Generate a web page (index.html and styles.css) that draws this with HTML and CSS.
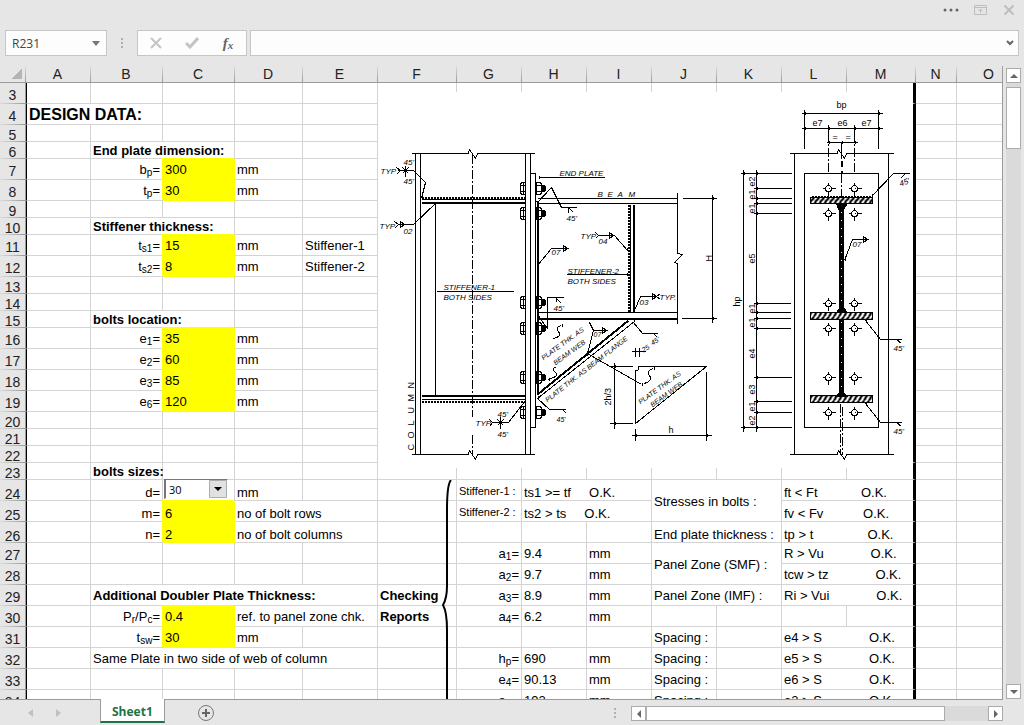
FILE: index.html
```html
<!DOCTYPE html>
<html lang="en">
<head>
    <meta charset="UTF-8">
    <meta name="viewport" content="width=device-width, initial-scale=1.0">
    <title>Sheet1</title>
    <link rel="stylesheet" href="styles.css">
</head>
<body>
    <header class="window-bar">
        <button class="icon-btn" aria-label="More"><svg width="18" height="14" viewBox="0 0 18 14"><g fill="#666"><circle cx="3" cy="7" r="1.5"/><circle cx="9" cy="7" r="1.5"/><circle cx="15" cy="7" r="1.5"/></g></svg></button>
        <button class="icon-btn" aria-label="Ribbon display options"><svg width="14" height="14" viewBox="0 0 14 14"><path d="M.5 2.500h12v9H.5zM.5 4.500h12M6.500 10V6M4.500 8l2-2 2 2" fill="none" stroke="#bdbdbd"/></svg></button>
        <button class="icon-btn" aria-label="Close"><svg width="14" height="14" viewBox="0 0 14 14"><path d="M2.500 2.500l9 9M11.500 2.500l-9 9" fill="none" stroke="#bdbdbd" stroke-width="2"/></svg></button>
    </header>

    <div class="formula-bar">
        <div class="box name-box">
            <input type="text" value="R231" aria-label="Name box">
            <button aria-label="Names"><svg width="8" height="5" viewBox="0 0 8 5"><path d="M0 0h8L4 5z" fill="#777"/></svg></button>
        </div>
        <span class="dots"></span>
        <div class="box fx-box">
            <button aria-label="Cancel"><svg width="12" height="12" viewBox="0 0 12 12"><path d="M1 1l10 10M11 1L1 11" fill="none" stroke="#c4c4c4" stroke-width="2"/></svg></button>
            <button aria-label="Enter"><svg width="14" height="12" viewBox="0 0 14 12"><path d="M1 6l4 4 8-9" fill="none" stroke="#c4c4c4" stroke-width="3"/></svg></button>
            <button class="fx" aria-label="Insert function">f<small>x</small></button>
        </div>
        <div class="box formula-box">
            <input type="text" aria-label="Formula">
            <button aria-label="Expand formula bar"><svg width="8" height="6" viewBox="0 0 8 6"><path d="M1 1l3 3 3-3" fill="none" stroke="#666" stroke-width="2"/></svg></button>
        </div>
    </div>

    <main class="workspace">
        <div class="sheet">
            <table>
                <colgroup>
                    <col class="w26"><col class="w65"><col class="w72"><col class="w72"><col class="w68"><col class="w75"><col class="w79">
                    <col class="w65"><col class="w65"><col class="w65"><col class="w65"><col class="w65"><col class="w65"><col class="w69"><col class="w41"><col class="w65">
                </colgroup>
                <thead>
                    <tr><th class="corner"><button aria-label="Select all"></button></th><th>A</th><th>B</th><th>C</th><th>D</th><th>E</th><th>F</th><th>G</th><th>H</th><th>I</th><th>J</th><th>K</th><th>L</th><th>M</th><th>N</th><th>O</th></tr>
                </thead>
                <tbody>
                    <tr><th>3</th><td></td><td></td><td></td><td></td><td></td><td></td><td></td><td></td><td></td><td></td><td></td><td></td><td class="edge"></td><td></td><td></td></tr>
                    <tr><th>4</th><td class="title" colspan="2">DESIGN DATA:</td><td></td><td></td><td></td>
                        <td class="edge drawing-cell" colspan="8" rowspan="19">
                            <svg class="drawing" viewBox="377.5 91.5 535 376" role="img" aria-label="End plate connection details">
                                <defs>
                                    <g id="bolt">
                                        <path d="M-2-6h-4l-1 2v8l1 2h4M-7-3h5M-7 3h5M-4-6v12M9-6h4l1 2v8l-1 2h-4zM9-3h5M9 3h5"/>
                                        <path class="fill" d="M15-3h2l1 1v4l-1 1h-2z"/>
                                    </g>
                                    <g id="hole"><circle r="3"/><path d="M-6 0h3M3 0h4M0-6v3M0 3v4M0 0h1"/></g>
                                    <pattern id="hatch" width="5" height="7" patternUnits="userSpaceOnUse"><path d="M-1 7L5-1M3 8L8 1" stroke-width="2"/></pattern>
                                </defs>

                                <!-- column -->
                                <path d="M411 153h57l1-4 6 9 2-5h57M411 454h57l1-4 6 9 2-5h57M415 153v301M420 153v301M525 153v301M530 153v301"/>
                                <path class="center" d="M472 154v262M472 434v20"/>
                                <path d="M530 173h5v254h-5M421 199h104M421 399h104M435 203v191"/>
                                <path class="thick" d="M421 202h104M421 395h104M537 200v194"/>
                                <path class="weld" d="M421 197h104M421 401h104"/>
                                <use href="#bolt" x="527" y="188"/><use href="#bolt" x="527" y="213"/><use href="#bolt" x="527" y="302"/>
                                <use href="#bolt" x="527" y="328"/><use href="#bolt" x="527" y="377"/><use href="#bolt" x="527" y="412"/>
                                <path d="M396 167l4 3-4 4M397 170h16l12 12-4 16M405 165v11M402 173l6-6M402 167l6 6M394 221l4 3-4 4M398 224h15l22-21M400 221v6l4-3z"/>
                                <path d="M436 291h77M489 419l3 3-3 4M492 422h16l17-22M500 416v12M497 425l6-6M497 419l6 6"/>
                                <g class="cad">
                                    <text x="380" y="173">TYP</text><text x="403" y="164">45'</text><text x="403" y="183">45'</text>
                                    <text x="379" y="228">TYP</text><text x="403" y="233">02</text>
                                    <text x="443" y="289">STIFFENER-1</text><text x="443" y="299">BOTH SIDES</text>
                                    <text x="475" y="425">TYP</text><text x="497" y="416">45'</text><text x="497" y="436">45'</text>
                                </g>
                                <text class="spread" transform="translate(413 450) rotate(-90)" x="0 12 25 37 49 62">COLUMN</text>

                                <!-- beam and stiffeners -->
                                <path d="M537 198h140M537 203h140M537 312h140M677 192v61l5 1-8 8 3 1v60M682 198h34M681 318h35M712 194v128"/>
                                <path class="thick" d="M537 318h140M633 204v108"/>
                                <path d="M630 204v108"/>
                                <path class="weld" d="M628 204v108"/>
                                <path d="M538 177h66M537 202l14-15 10 20h15M568 207v5M568 207l5 5"/>
                                <path d="M537 265l14-17h17M563 245v6l4-3z"/>
                                <path d="M595 232l3 3-3 3M598 235h16l13 15M609 232v6l4-3zM566 274h61"/>
                                <path d="M634 310l6-14h16M652 293v6l4-3zM660 293l-4 3 4 3"/>
                                <path d="M538 316l9 12v-31h16M556 297v4M556 298l5 5"/>
                                <path class="dot" d="M538 177h1M537 200v1M537 264h1M626 249h1M626 274h1M712 198h1M712 318h1M538 317h1M633 320h1M434 204h1M421 196h1M524 401h1M537 397h1"/>
                                <g class="cad">
                                    <text x="559" y="175">END PLATE</text><text x="566" y="220">45'</text><text x="551" y="254">07</text>
                                    <text x="580" y="238">TYP</text><text x="598" y="243">04</text>
                                    <text x="567" y="273">STIFFENER-2</text><text x="567" y="283">BOTH SIDES</text>
                                    <text x="639" y="304">03</text><text x="659" y="299">TYP.</text><text x="553" y="310">45'</text>
                                    <text x="597 607 617 628" y="196">BEAM</text>
                                </g>
                                <text transform="translate(711 261) rotate(-90)">H</text>

                                <!-- haunch -->
                                <path class="thick" d="M537 394l91-74"/>
                                <path d="M537 398l97-77M537 398l12 11h16M562 409l4 4M633 322l9 11h15M653 333l4 4M589 322l4 8h14M593 330l-6 23 54 31M602 327v6l4-3z"/>
                                <path d="M561 325q-7 1-3 6t-5 7M556 366q-6 3-1 6t-7 7M653 368q-8 2-4 7t-5 8"/>
                                <path class="dot" d="M561 325h1M548 379h1M653 368h1M641 384h1M586 354h1"/>
                                <path d="M635 347v9M639 347v9M631 351h14"/>
                                <path d="M635 370h2q2-1 1-4h68L635 423zM614 362v66M609 366h23M609 423h23M631 435h80M635 428v12M706 371v69"/>
                                <path class="dot" d="M614 366h1M614 423h1M635 435h1M706 435h1"/>
                                <g class="cad small">
                                    <text transform="translate(543 360) rotate(-36)">PLATE THK. AS</text>
                                    <text transform="translate(555 365) rotate(-36)">BEAM WEB</text>
                                    <text transform="translate(547 402) rotate(-38)">PLATE THK. AS BEAM FLANGE</text>
                                    <text transform="translate(640 404) rotate(-36)">PLATE THK. AS</text>
                                    <text transform="translate(652 407) rotate(-36)">BEAM WEB</text>
                                    <text x="593" y="336">07</text>
                                    <text transform="translate(643 352) rotate(-30)">25</text>
                                    <text transform="translate(652 345) rotate(-30)">45'</text>
                                    <text x="556" y="421">45'</text>
                                </g>
                                <text transform="translate(610 405) rotate(-90)">2h/3</text>
                                <text x="668" y="432">h</text>

                                <!-- end plate elevation -->
                                <path d="M801 113h81M801 128h81M804 109v39M878 109v39M828 124v8M854 124v8M826 142h31"/>
                                <path class="center" d="M828 132v41M854 132v41M841 173v24"/>
                                <path d="M789 153h48l1-4 6 9 2-5h47M789 454h48l1-4 6 9 2-5h47M794 153v301M888 153v301M804 173h74v254h-74z"/>
                                <path d="M841 142v16"/>
                                <path class="thick" d="M841 160v6M841 170v3"/>
                                <path class="band" d="M841 209v97M841 319v75"/>
                                <path class="band-dots" d="M841 211v93M841 321v71"/>
                                <path class="center" d="M840 403v51M842 406v48"/>
                                <path class="fill" d="M836 203h11l-4 6h-5zM841 305l-5 7h11zM838 393h6l3 3h-12z"/>
                                <g class="flange"><rect x="810" y="197" width="62" height="6"/><rect x="810" y="312" width="62" height="7"/><rect x="810" y="395" width="62" height="7"/></g>
                                <path class="weld" d="M811 196h61"/>
                                <use href="#hole" x="828" y="188"/><use href="#hole" x="854" y="188"/><use href="#hole" x="828" y="213"/><use href="#hole" x="854" y="213"/>
                                <use href="#hole" x="828" y="303"/><use href="#hole" x="854" y="303"/><use href="#hole" x="828" y="328"/><use href="#hole" x="854" y="328"/>
                                <use href="#hole" x="828" y="377"/><use href="#hole" x="854" y="377"/><use href="#hole" x="828" y="412"/><use href="#hole" x="854" y="412"/>
                                <path d="M743 169v262M756 169v262M740 173h51M740 427h51M753 188h38M753 198h38M753 203h38M753 213h38M753 303h37M753 312h37M753 318h37M753 328h37M753 377h38M753 401h38M753 412h38"/>
                                <path d="M871 196l22-23h16M905 173l-5 5M844 260l8-21h16M863 236v6l4-3zM865 320l15 19h21M865 403l15 19h21M896 339l5 4M896 422l5 4"/>
                                <path class="dot" d="M804 113h1M878 113h1M804 128h1M828 128h1M854 128h1M878 128h1M828 142h1M841 142h1M854 142h1M743 173h1M756 173h1M743 427h1M756 427h1M756 188h1M756 198h1M756 203h1M756 213h1M756 303h1M756 312h1M756 318h1M756 328h1M756 377h1M756 401h1M756 412h1M871 195h1M844 259h1M865 320h1M865 403h1"/>
                                <text x="836" y="107">bp</text><text x="812" y="125">e7</text><text x="837" y="125">e6</text><text x="861" y="125">e7</text>
                                <text x="832" y="139">=</text><text x="845" y="139">=</text>
                                <text transform="translate(739 306) rotate(-90)">hp</text>
                                <g transform="translate(754 0)">
                                    <text transform="translate(0 186) rotate(-90)">e2</text><text transform="translate(0 199) rotate(-90)">e1</text><text transform="translate(0 213) rotate(-90)">e1</text>
                                    <text transform="translate(0 263) rotate(-90)">e5</text><text transform="translate(0 313) rotate(-90)">e1</text><text transform="translate(0 327) rotate(-90)">e1</text>
                                    <text transform="translate(0 358) rotate(-90)">e4</text><text transform="translate(0 394) rotate(-90)">e3</text><text transform="translate(0 411) rotate(-90)">e1</text><text transform="translate(0 425) rotate(-90)">e2</text>
                                </g>
                                <g class="cad">
                                    <text x="852" y="246">07</text><text x="893" y="350">45'</text><text x="893" y="433">45'</text>
                                    <text transform="translate(900 186) rotate(-20)">45'</text>
                                </g>
                            </svg>
                        </td><td></td><td></td></tr>
                    <tr class="low"><th>5</th><td></td><td></td><td></td><td></td><td></td><td></td><td></td></tr>
                    <tr class="low"><th>6</th><td></td><td class="bold" colspan="2">End plate dimension:</td><td></td><td></td><td></td><td></td></tr>
                    <tr><th>7</th><td></td><td class="num">b<sub>p</sub>=</td><td class="input">300</td><td>mm</td><td></td><td></td><td></td></tr>
                    <tr><th>8</th><td></td><td class="num">t<sub>p</sub>=</td><td class="input">30</td><td>mm</td><td></td><td></td><td></td></tr>
                    <tr class="low"><th>9</th><td></td><td></td><td></td><td></td><td></td><td></td><td></td></tr>
                    <tr class="low"><th>10</th><td></td><td class="bold" colspan="2">Stiffener thickness:</td><td></td><td></td><td></td><td></td></tr>
                    <tr><th>11</th><td></td><td class="num">t<sub>s1</sub>=</td><td class="input">15</td><td>mm</td><td>Stiffener-1</td><td></td><td></td></tr>
                    <tr><th>12</th><td></td><td class="num">t<sub>s2</sub>=</td><td class="input">8</td><td>mm</td><td>Stiffener-2</td><td></td><td></td></tr>
                    <tr class="low"><th>13</th><td></td><td></td><td></td><td></td><td></td><td></td><td></td></tr>
                    <tr class="low"><th>14</th><td></td><td></td><td></td><td></td><td></td><td></td><td></td></tr>
                    <tr class="low"><th>15</th><td></td><td class="bold" colspan="2">bolts location:</td><td></td><td></td><td></td><td></td></tr>
                    <tr><th>16</th><td></td><td class="num">e<sub>1</sub>=</td><td class="input">35</td><td>mm</td><td></td><td></td><td></td></tr>
                    <tr><th>17</th><td></td><td class="num">e<sub>2</sub>=</td><td class="input">60</td><td>mm</td><td></td><td></td><td></td></tr>
                    <tr><th>18</th><td></td><td class="num">e<sub>3</sub>=</td><td class="input">85</td><td>mm</td><td></td><td></td><td></td></tr>
                    <tr><th>19</th><td></td><td class="num">e<sub>6</sub>=</td><td class="input">120</td><td>mm</td><td></td><td></td><td></td></tr>
                    <tr class="low"><th>20</th><td></td><td></td><td></td><td></td><td></td><td></td><td></td></tr>
                    <tr class="low"><th>21</th><td></td><td></td><td></td><td></td><td></td><td></td><td></td></tr>
                    <tr class="low"><th>22</th><td></td><td></td><td></td><td></td><td></td><td></td><td></td></tr>
                    <tr class="low"><th>23</th><td></td><td class="bold">bolts sizes:</td><td></td><td></td><td></td><td></td><td></td><td></td><td></td><td></td><td></td><td></td><td class="edge"></td><td></td><td></td></tr>
                    <tr class="bottom"><th>24</th><td></td><td class="num"><label for="bolt-size">d=</label></td>
                        <td class="combo-cell"><div class="combo"><select id="bolt-size"><option>24</option><option selected>30</option><option>36</option></select><svg width="18" height="18" viewBox="0 0 18 18"><path d="M.5.5h17v17H.5z" fill="#e1e1e1" stroke="#adadad"/><path d="M5 7h8l-4 4z"/></svg></div></td>
                        <td>mm</td><td></td>
                        <td class="brace-cell"><svg class="brace" width="12" height="222" viewBox="0 0 12 222"><path d="M10 0Q6 4 6 30V106Q6 118 2 125Q6 132 6 150V222" fill="none" stroke="#000" stroke-width="2"/></svg></td>
                        <td class="note">Stiffener-1 :</td><td colspan="2">ts1 &gt;= tf     O.K.</td><td class="merged" colspan="2" rowspan="2">Stresses in bolts :</td><td class="edge" colspan="2">ft &lt; Ft            O.K.</td><td></td><td></td></tr>
                    <tr class="bottom"><th>25</th><td></td><td class="num">m=</td><td class="input">6</td><td colspan="2">no of bolt rows</td><td></td><td class="note">Stiffener-2 :</td><td colspan="2">ts2 &gt; ts     O.K.</td><td class="edge" colspan="2">fv &lt; Fv           O.K.</td><td></td><td></td></tr>
                    <tr class="bottom"><th>26</th><td></td><td class="num">n=</td><td class="input">2</td><td colspan="2">no of bolt columns</td><td></td><td></td><td></td><td></td><td colspan="2">End plate thickness :</td><td class="edge" colspan="2">tp &gt; t               O.K.</td><td></td><td></td></tr>
                    <tr><th>27</th><td></td><td></td><td></td><td></td><td></td><td></td><td class="num">a<sub>1</sub>=</td><td>9.4</td><td>mm</td><td colspan="2" rowspan="2">Panel Zone (SMF) :</td><td class="edge" colspan="2">R &gt; Vu             O.K.</td><td></td><td></td></tr>
                    <tr><th>28</th><td></td><td></td><td></td><td></td><td></td><td></td><td class="num">a<sub>2</sub>=</td><td>9.7</td><td>mm</td><td class="edge" colspan="2">tcw &gt; tz             O.K.</td><td></td><td></td></tr>
                    <tr><th>29</th><td></td><td class="bold" colspan="4">Additional Doubler Plate Thickness:</td><td class="bold">Checking</td><td class="num">a<sub>3</sub>=</td><td>8.9</td><td>mm</td><td colspan="2">Panel Zone (IMF) :</td><td class="edge" colspan="2">Ri &gt; Vui             O.K.</td><td></td><td></td></tr>
                    <tr><th>30</th><td></td><td class="num">P<sub>r</sub>/P<sub>c</sub>=</td><td class="input">0.4</td><td colspan="2">ref. to panel zone chk.</td><td class="bold">Reports</td><td class="num">a<sub>4</sub>=</td><td>6.2</td><td>mm</td><td></td><td></td><td></td><td class="edge"></td><td></td><td></td></tr>
                    <tr><th>31</th><td></td><td class="num">t<sub>sw</sub>=</td><td class="input">30</td><td>mm</td><td></td><td></td><td></td><td></td><td></td><td>Spacing :</td><td></td><td class="edge" colspan="2">e4 &gt; S             O.K.</td><td></td><td></td></tr>
                    <tr><th>32</th><td></td><td colspan="4">Same Plate in two side of web of column</td><td></td><td class="num">h<sub>p</sub>=</td><td>690</td><td>mm</td><td>Spacing :</td><td></td><td class="edge" colspan="2">e5 &gt; S             O.K.</td><td></td><td></td></tr>
                    <tr><th>33</th><td></td><td></td><td></td><td></td><td></td><td></td><td class="num">e<sub>4</sub>=</td><td>90.13</td><td>mm</td><td>Spacing :</td><td></td><td class="edge" colspan="2">e6 &gt; S             O.K.</td><td></td><td></td></tr>
                    <tr><th>34</th><td></td><td></td><td></td><td></td><td></td><td></td><td class="num">e<sub>5</sub>=</td><td>192</td><td>mm</td><td>Spacing :</td><td></td><td class="edge" colspan="2">e3 &gt; S             O.K.</td><td></td><td></td></tr>
                </tbody>
            </table>
        </div>
        <div class="scroll vertical">
            <button aria-label="Scroll up"><svg width="8" height="4" viewBox="0 0 8 4"><path d="M0 4h8L4 0z"/></svg></button>
            <div class="track"><div class="thumb"></div></div>
            <button aria-label="Scroll down"><svg width="8" height="4" viewBox="0 0 8 4"><path d="M0 0h8L4 4z"/></svg></button>
        </div>
    </main>

    <footer class="tab-bar">
        <nav class="tabs">
            <button class="step" aria-label="Previous sheet"><svg width="5" height="8" viewBox="0 0 5 8"><path d="M5 0v8L0 4z"/></svg></button>
            <button class="step" aria-label="Next sheet"><svg width="5" height="8" viewBox="0 0 5 8"><path d="M0 0v8l5-4z"/></svg></button>
            <a class="tab" href="#">Sheet1</a>
            <button class="add" aria-label="New sheet"><svg width="18" height="18" viewBox="0 0 18 18"><circle cx="9" cy="9" r="7.500" fill="none" stroke="#777"/><path d="M5 9h8M9 5v8" stroke="#666" stroke-width="2"/></svg></button>
        </nav>
        <span class="dots"></span>
        <div class="scroll horizontal">
            <button aria-label="Scroll left"><svg width="4" height="8" viewBox="0 0 4 8"><path d="M4 0v8L0 4z"/></svg></button>
            <div class="track"><div class="thumb"></div></div>
            <button aria-label="Scroll right"><svg width="4" height="8" viewBox="0 0 4 8"><path d="M0 0v8l4-4z"/></svg></button>
        </div>
    </footer>
</body>
</html>
```
FILE: styles.css
```css
* {
    margin: 0;
    padding: 0;
    box-sizing: border-box;
}

body {
    height: 100vh;
    display: flex;
    flex-direction: column;
    overflow: hidden;
    background: #e6e6e6;
    color: #000;
    font-family: "Liberation Sans", Arial, sans-serif;
    font-size: 13px;
}

button {
    border: none;
    background: none;
    display: flex;
    align-items: center;
    justify-content: center;
}

/* top bars */
.window-bar {
    height: 30px;
    display: flex;
    justify-content: flex-end;
    gap: 14px;
    padding: 3px 8px 0 0;
}

.icon-btn {
    height: 14px;
}

.formula-bar {
    display: flex;
    height: 26px;
    margin: 0 5px 10px;
}

.box {
    display: flex;
    background: #fdfdfd;
    border: 1px solid #c6c6c6;
}

.box input {
    flex: 1;
    min-width: 0;
    border: none;
    background: none;
    padding-left: 6px;
    font-family: "Open Sans", sans-serif;
    font-size: 12px;
    color: #444;
}

.name-box {
    width: 102px;
}

.name-box button {
    width: 20px;
}

.dots {
    width: 2px;
    height: 10px;
    margin: 8px 14px;
    background: repeating-linear-gradient(#b0b0b0 0 2px, transparent 2px 4px);
}

.fx-box {
    width: 110px;
    margin-right: 3px;
}

.fx-box button {
    flex: 1;
}

.fx {
    font: italic bold 15px "Liberation Serif", serif;
    color: #666;
}

.fx small {
    font-size: 11px;
    padding-top: 4px;
}

.formula-box {
    flex: 1;
}

.formula-box button {
    width: 16px;
}

/* sheet */
.workspace {
    flex: 1;
    min-height: 0;
    display: flex;
}

.sheet {
    flex: 1;
    min-width: 0;
    overflow: hidden;
    background: #fff;
    border-right: 1px solid #9b9b9b;
}

table {
    width: 1022px;
    table-layout: fixed;
    border-collapse: separate;
    border-spacing: 0;
}

.w26 { width: 26px; }
.w41 { width: 41px; }
.w65 { width: 65px; }
.w68 { width: 68px; }
.w69 { width: 69px; }
.w72 { width: 72px; }
.w75 { width: 75px; }
.w79 { width: 79px; }

th {
    font-size: 14px;
    font-weight: normal;
    line-height: 14px;
    color: #222;
    background: #e6e6e6;
}

thead th {
    height: 17px;
    padding-right: 2px;
    border-bottom: 1px solid #9b9b9b;
    background: linear-gradient(#dcdcdc, #999) right / 1px 100% no-repeat #e6e6e6;
}

tbody th {
    padding-top: 2px;
    border-right: 1px solid #9b9b9b;
    background: linear-gradient(90deg, #dcdcdc, #999) bottom / 100% 1px no-repeat #e6e6e6;
}

.corner button {
    width: 10px;
    height: 10px;
    margin-left: 12px;
    background: linear-gradient(135deg, transparent 50%, #b4b4b4 50%);
}

td {
    height: 21px;
    padding: 2px 2px 0;
    line-height: 14px;
    white-space: pre;
    border-right: 1px solid #d4d4d4;
    border-bottom: 1px solid #d4d4d4;
}

.low td {
    height: 17px;
}

th + td {
    border-left: 1px solid #000;
}

.bottom td,
.bottom th {
    vertical-align: bottom;
}

td.merged {
    vertical-align: middle;
}

td.edge {
    border-right: 3px solid #000;
}

.title {
    font-size: 16px;
    font-weight: bold;
}

.bold {
    font-weight: bold;
}

.num {
    text-align: right;
}

td.input {
    background: #ff0;
    border-color: #ff0;
    box-shadow: -1px -1px 0 #ff0;
}

.bottom td.note {
    padding-top: 4px;
    font-size: 11px;
    vertical-align: top;
}

sub {
    font-size: 10px;
    line-height: 0;
    vertical-align: -2px;
}

.bottom td.combo-cell {
    padding: 0 1px;
    vertical-align: top;
}

.combo {
    position: relative;
    width: 64px;
    height: 20px;
    margin-top: -1px;
    border: 1px solid #fff;
    border-top: 1px solid #777;
    border-left: 2px solid #777;
    background: #fff;
}

.combo select {
    display: block;
    width: 100%;
    height: 18px;
    padding-left: 3px;
    appearance: none;
    border: none;
    background: none;
    font-family: "Open Sans", sans-serif;
    font-size: 11px;
    color: #000;
}

.combo svg {
    position: absolute;
    right: 0;
    top: 0;
    pointer-events: none;
}

.brace-cell {
    position: relative;
}

.brace {
    position: absolute;
    left: 63px;
    top: 0;
}

/* floating picture */
.drawing-cell {
    position: relative;
}

.drawing {
    position: absolute;
    left: 0;
    top: -12px;
    width: 535px;
    height: 376px;
    background: #fff;
    fill: none;
    stroke: #000;
    shape-rendering: crispEdges;
}

.drawing text {
    font-size: 9px;
    fill: #000;
    stroke: none;
}

.drawing .cad text {
    font-size: 8px;
    font-style: italic;
}

.drawing .small text {
    font-size: 7px;
}

.drawing .thick {
    stroke-width: 2;
}

.drawing .fill {
    fill: #000;
}

.drawing .dot {
    stroke-width: 3;
}

.drawing .weld {
    stroke-width: 2;
    stroke-dasharray: 2 1;
}

.drawing .center {
    stroke-dasharray: 9 2 2 2;
}

.drawing .band {
    stroke-width: 5;
}

.drawing .band-dots {
    stroke: #fff;
    stroke-dasharray: 1 7;
}

.drawing .flange {
    fill: url(#hatch);
}

/* scroll bars */
.scroll {
    display: flex;
}

.scroll button {
    flex: none;
    width: 15px;
    height: 15px;
    background: #fff;
    border: 1px solid #ababab;
    fill: #666;
}

.track {
    flex: 1;
    display: flex;
    background: #dadada;
}

.thumb {
    background: #fff;
    border: 1px solid #ababab;
}

.vertical {
    flex-direction: column;
    margin: 2px 3px 0;
}

.vertical .track {
    padding-top: 4px;
}

.vertical .thumb {
    width: 15px;
    height: 62px;
}

/* bottom bar */
.tab-bar {
    height: 26px;
    display: flex;
}

.tabs {
    flex: 1;
    display: flex;
    border-top: 1px solid #9b9b9b;
    padding-left: 16px;
}

.step {
    width: 28px;
    fill: #c0c0c0;
}

.tab {
    margin: -1px 0 2px 28px;
    padding: 0 11px;
    background: #fff;
    border: 1px solid #9b9b9b;
    border-top: none;
    border-bottom: 2px solid #217346;
    color: #217346;
    font: bold 12px/26px "Open Sans", sans-serif;
    text-decoration: none;
}

.add {
    margin-left: 32px;
}

.tab-bar > .dots {
    margin: 0;
    padding: 0 15px 0 0;
    width: 17px;
    height: 26px;
    border-top: 1px solid #9b9b9b;
    background: repeating-linear-gradient(#b0b0b0 0 2px, transparent 2px 4px) 0 8px / 2px 10px no-repeat;
}

.horizontal {
    width: 393px;
    padding: 7px 21px 4px 0;
    background: linear-gradient(#9b9b9b, #9b9b9b) 0 0 / 372px 1px no-repeat;
}

.horizontal .thumb {
    width: 299px;
}
```
